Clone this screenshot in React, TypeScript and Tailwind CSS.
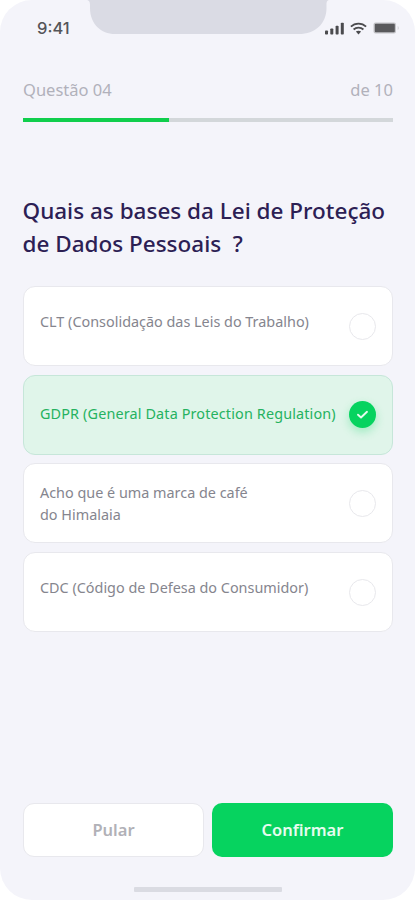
import { useState } from 'react'
import clsx from 'clsx'

const TOTAL = 10
const CURRENT = 4

type Option = {
  id: string
  label: string
  className: string
}

const OPTIONS: Option[] = [
  { id: 'clt', label: 'CLT (Consolidação das Leis do Trabalho)', className: 'pb-[9px]' },
  { id: 'gdpr', label: 'GDPR (General Data Protection Regulation)', className: 'pb-[2px] tracking-[0.14px]' },
  { id: 'cafe', label: 'Acho que é uma marca de café\ndo Himalaia', className: 'pt-[2px]' },
  { id: 'cdc', label: 'CDC (Código de Defesa do Consumidor)', className: 'pb-[8px]' },
]

function StatusBar() {
  return (
    <div className="relative flex h-[56px] shrink-0 items-center justify-between pr-[15px] pl-[37px]">
      <svg className="absolute top-0 left-[86px]" width="244" height="34" viewBox="0 0 244 34" aria-hidden>
        <path
          d="M0 0C3 0 4 1.5 4 5V8C4 24 15 34 29 34H213C229 34 240.5 24 240.5 8V5C240.5 1.5 241 0 244 0Z"
          fill="#dadbe4"
        />
      </svg>
      <span className="font-['Inter',sans-serif] text-[16.5px] font-medium text-[#555558]">9:41</span>
      <div className="flex items-center">
        <svg width="20" height="13" viewBox="0 0 20 13" fill="#4b4b4e" aria-hidden>
          <rect x="0" y="8.5" width="3" height="4" rx="0.8" />
          <rect x="5.3" y="6.5" width="3" height="6" rx="0.8" />
          <rect x="10.6" y="3.8" width="3" height="8.7" rx="0.8" />
          <rect x="15.8" y="0.8" width="3" height="11.7" rx="0.8" />
        </svg>
        <svg className="ml-[5px]" width="17" height="13" viewBox="0 0 17 13" aria-hidden>
          <g fill="none" stroke="#4b4b4e" strokeWidth="1.8">
            <path d="M0.9 4.7C5 0.5 12 0.5 16.1 4.7" />
            <path d="M3.6 7.5C6.3 4.9 10.7 4.9 13.4 7.5" />
          </g>
          <path d="M5.9 9.6C7.4 8.3 9.6 8.3 11.1 9.6L8.5 12.4Z" fill="#4b4b4e" />
        </svg>
        <svg className="ml-[6px]" width="27" height="12" viewBox="0 0 27 12" aria-hidden>
          <rect x="0.5" y="0.5" width="22.5" height="11" rx="2" fill="#c4c4c8" />
          <rect x="1.8" y="1.8" width="20" height="8.4" rx="1" fill="#59595c" />
          <path d="M24.8 4V8C25.7 7.5 25.7 4.5 24.8 4Z" fill="#b9b9be" />
        </svg>
      </div>
    </div>
  )
}

function Radio({ checked }: { checked: boolean }) {
  if (!checked) {
    return <span className="size-[27px] shrink-0 rounded-full border-[1.5px] border-[#e8e8ec] bg-white" />
  }
  return (
    <span className="flex size-[27px] shrink-0 items-center justify-center rounded-full bg-[#06d35f] shadow-[0_4px_10px_rgba(6,211,95,0.3)]">
      <svg width="13" height="11" viewBox="0 0 13 11" fill="none" aria-hidden>
        <path d="M2 5.7L5 8.5L11 2.8" stroke="#e5fbee" strokeWidth="1.9" strokeLinecap="round" strokeLinejoin="round" />
      </svg>
    </span>
  )
}

export default function App() {
  const [selected, setSelected] = useState('gdpr')

  return (
    <div className="h-[900px] w-[415px] bg-white font-['Noto_Sans',sans-serif]">
      <div className="flex h-full flex-col overflow-hidden rounded-[32px] bg-[#f4f4fa]">
        <StatusBar />

        <header className="mt-[22px] mr-[22px] ml-[23px]">
          <div className="flex h-[24px] items-center justify-between text-[16.5px] text-[#b1b1bb]">
            <span>Questão 04</span>
            <span>de {TOTAL}</span>
          </div>
          <div className="mt-[16px] h-[4px] bg-[#d3d7da]">
            <div className="h-full bg-[#10ce4c]" style={{ width: `${(CURRENT / TOTAL) * 98.6}%` }} />
          </div>
        </header>

        <h1 className="mx-[22.5px] mt-[72px] text-[22.5px] leading-[33px] font-medium whitespace-pre text-[#2c2054]">
          {'Quais as bases da Lei de Proteção\nde Dados Pessoais  ?'}
        </h1>

        <div className="mt-[26px] mr-[22px] ml-[23px] flex flex-col gap-[8.7px]">
          {OPTIONS.map((option) => {
            const checked = option.id === selected
            return (
              <button
                key={option.id}
                type="button"
                onClick={() => setSelected(option.id)}
                className={clsx(
                  'flex h-[80px] items-center justify-between rounded-[12px] border-[1.5px] px-[16px] text-left',
                  checked ? 'border-[#c6e6d9] bg-[#e0f5ea] text-[#25b260]' : 'border-[#e8e8ed] bg-white text-[#85858e]'
                )}
              >
                <span className={clsx('text-[14.4px] leading-[22px] whitespace-pre', option.className)}>
                  {option.label}
                </span>
                <Radio checked={checked} />
              </button>
            )
          })}
        </div>

        <div className="mt-auto mr-[22px] ml-[23px] grid grid-cols-2 gap-[8px]">
          <button
            type="button"
            className="h-[54px] rounded-[11px] border-[1.5px] border-[#e8e8ed] bg-white text-[16.5px] font-semibold text-[#b1b1b7]"
          >
            Pular
          </button>
          <button type="button" className="h-[54px] rounded-[10px] bg-[#06d35f] text-[16.5px] font-semibold text-[#e6fcef]">
            Confirmar
          </button>
        </div>

        <div className="mx-auto mt-[30px] mb-[8px] h-[5px] w-[148px] rounded-[1px] bg-[#dadbe2]" />
      </div>
    </div>
  )
}
